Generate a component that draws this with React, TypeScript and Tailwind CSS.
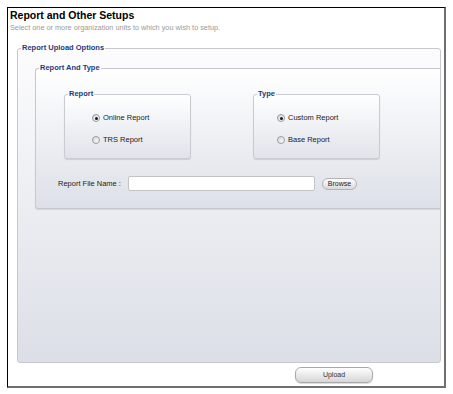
import React from "react";

const legendCls =
  "ml-[3px] px-[1px] text-[7.5px] font-bold leading-[10px] text-[#1c3a78]";

function Radio({ checked }: { checked?: boolean }) {
  return (
    <span className="relative inline-block h-[8px] w-[8px] shrink-0 rounded-full border border-[#9a9a9a] bg-gradient-to-br from-[#d4d4d4] to-white">
      {checked && (
        <span className="absolute left-[1.5px] top-[1.5px] h-[3px] w-[3px] rounded-full bg-[#1a1a1a]" />
      )}
    </span>
  );
}

function Option({ label, checked }: { label: string; checked?: boolean }) {
  return (
    <label className="flex items-center gap-[3px] text-[7.5px] leading-[10px] text-[#222]">
      <Radio checked={checked} />
      {label}
    </label>
  );
}

function GroupBox({
  title,
  options,
  indent,
}: {
  title: string;
  options: { label: string; checked?: boolean }[];
  indent: string;
}) {
  return (
    <fieldset className="h-[70px] w-[127px] rounded-[3px] border border-[#c9cbd0] bg-gradient-to-b from-white to-[#e0e3ea] shadow-[0_1px_1px_rgba(0,0,0,0.12)]">
      <legend className={legendCls}>{title}</legend>
      <div className={`flex flex-col gap-[12px] pt-[14px] ${indent}`}>
        {options.map((o) => (
          <Option key={o.label} {...o} />
        ))}
      </div>
    </fieldset>
  );
}

export default function App() {
  return (
    <div className="min-h-[394px] bg-white pl-[7px] pt-[7px] font-['Liberation_Sans',Arial,sans-serif]">
      <div className="h-[381px] w-[439px] border-b-2 border-l border-r-2 border-t border-b-[#6f6f6f] border-l-black border-r-[#6f6f6f] border-t-black pl-[2px]">
        <h1 className="mt-[1px] text-[10.5px] font-bold leading-[13px] text-black">
          Report and Other Setups
        </h1>
        <p className="mt-[1px] text-[7.3px] leading-[9px] text-[#9a9a9a]">
          Select one or more organization units to which you wish to setup.
        </p>

        <fieldset className="ml-[7px] mt-[11px] h-[320px] w-[424px] rounded-[3px] border border-[#c6c8cc] bg-gradient-to-b from-[#fcfcfd] to-[#dcdfe7]">
          <legend className={legendCls}>Report Upload Options</legend>

          <fieldset className="ml-[17px] mt-[10px] h-[146px] w-[405px] rounded-l-[3px] border border-r-0 border-[#c6c8cc] bg-gradient-to-b from-white to-[#dde0e8] shadow-[0_1px_1px_rgba(0,0,0,0.1)]">
            <legend className={legendCls}>Report And Type</legend>

            <div className="ml-[28px] mt-[16px] flex gap-[62px]">
              <GroupBox
                title="Report"
                indent="pl-[27px]"
                options={[
                  { label: "Online Report", checked: true },
                  { label: "TRS Report" },
                ]}
              />
              <GroupBox
                title="Type"
                indent="pl-[23px]"
                options={[
                  { label: "Custom Report", checked: true },
                  { label: "Base Report" },
                ]}
              />
            </div>

            <div className="ml-[22px] mt-[17px] flex items-center">
              <span className="w-[70px] text-[7.5px] leading-[10px] text-[#222]">
                Report File Name :
              </span>
              <input
                type="text"
                className="h-[15px] w-[187px] rounded-[2px] border border-[#c3c3c3] bg-white text-[8px] outline-none"
              />
              <button className="ml-[7px] h-[12px] w-[35px] rounded-full border border-[#b3b3b3] bg-gradient-to-b from-white to-[#d9d9d9] text-[7px] leading-[10px] text-[#222]">
                Browse
              </button>
            </div>
          </fieldset>
        </fieldset>

        <div className="mt-[4px] flex pl-[285px]">
          <button className="h-[16px] w-[78px] rounded-[6px] border border-[#a9a9a9] bg-gradient-to-b from-white to-[#d6d6d6] text-[7px] leading-[10px] text-[#333] shadow-[0_1px_1px_rgba(0,0,0,0.15)]">
            Upload
          </button>
        </div>
      </div>
    </div>
  );
}
